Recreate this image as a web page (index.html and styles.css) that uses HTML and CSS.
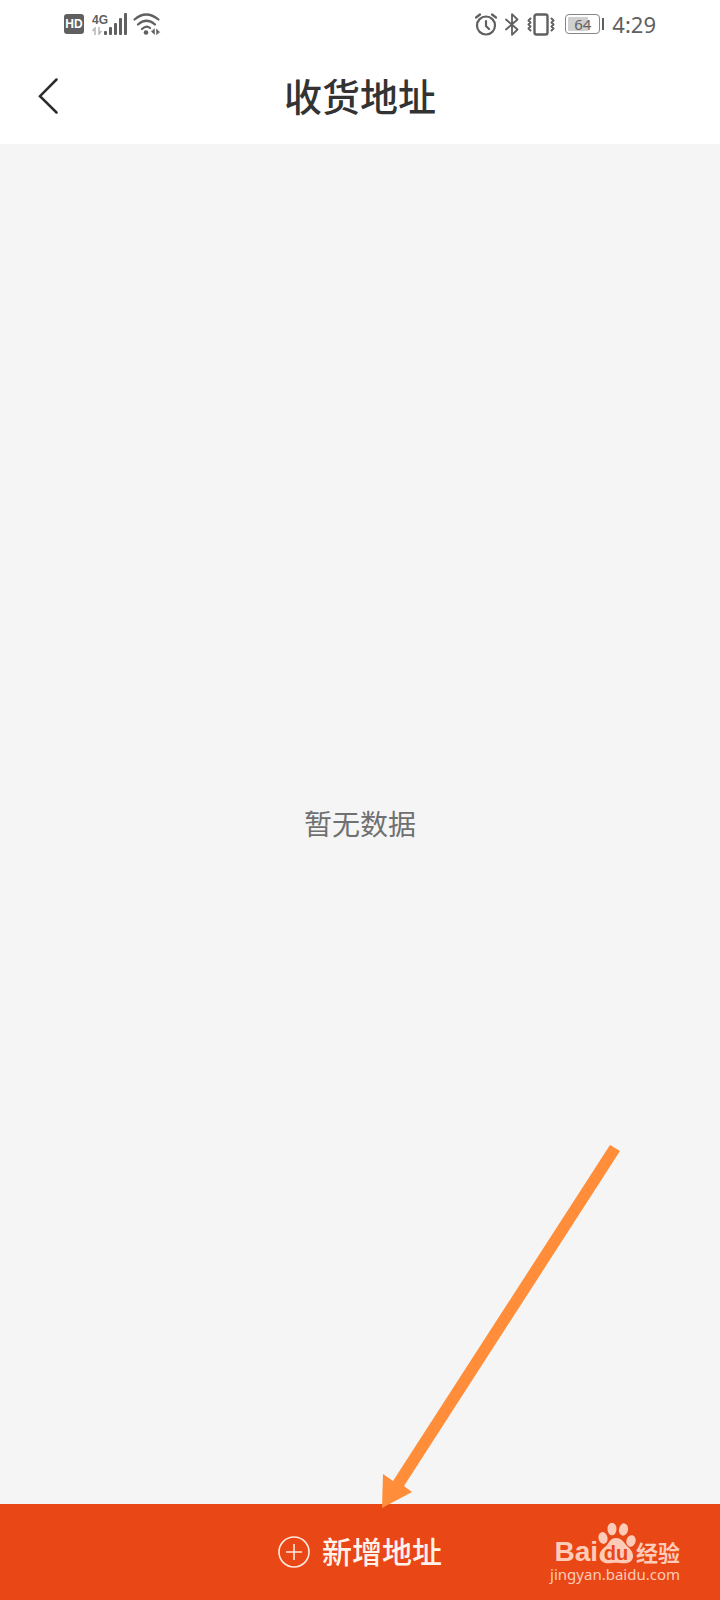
FILE: index.html
```html
<!DOCTYPE html>
<html lang="zh-CN">
<head>
    <meta charset="utf-8">
    <meta name="viewport" content="width=device-width, initial-scale=1">
    <title>收货地址</title>
    <link rel="stylesheet" href="styles.css">
</head>
<body>
    <div class="page">
        <div class="status-bar">
            <div class="status-left">
                <span class="hd">HD</span>
                <div class="network">
                    <span class="network-type">4G</span>
                    <svg width="10" height="8" viewBox="0 0 10 8" fill="none" stroke="#b5b5b5" stroke-width="1.5">
                        <path d="M3 8V1L0.5 4M7 0v7l2.5-3"/>
                    </svg>
                </div>
                <svg class="signal" width="23" height="22" viewBox="0 0 23 22" fill="#606060">
                    <rect x="0" y="18" width="3" height="4" rx="1"/>
                    <rect x="5" y="14" width="3" height="8" rx="1"/>
                    <rect x="10" y="10" width="3" height="12" rx="1"/>
                    <rect x="15" y="5" width="3" height="17" rx="1"/>
                    <rect x="20" y="0" width="3" height="22" rx="1"/>
                </svg>
                <svg class="wifi" width="28" height="22" viewBox="0 0 28 22" fill="none" stroke="#606060" stroke-width="2.2" stroke-linecap="round">
                    <path d="M1.5 6.5Q13 -3.5 25.5 6.5M5 11.5Q13.5 4 22 11.5M9 16Q13.5 12 17 15"/>
                    <circle cx="13" cy="19.5" r="2.3" fill="#606060" stroke="none"/>
                    <path d="M21.5 16v5.5l-3-3zM23.5 21.5v-5.5l3 3z" fill="#606060" stroke-width="0.5"/>
                </svg>
            </div>
            <div class="status-right">
                <svg width="22" height="23" viewBox="0 0 22 23" fill="none" stroke="#606060" stroke-width="2.2" stroke-linecap="round" stroke-linejoin="round">
                    <circle cx="11" cy="12.5" r="9"/>
                    <path d="M1 4.5L5 1.5M21 4.5L17 1.5M11 8v5l3 3"/>
                </svg>
                <svg width="14" height="23" viewBox="0 0 14 23" fill="none" stroke="#606060" stroke-width="1.8" stroke-linecap="round" stroke-linejoin="round">
                    <path d="M1 6.5L12.5 16.5 7 21.8V1.2L12.5 6.5 1 16.5"/>
                </svg>
                <svg width="28" height="23" viewBox="0 0 28 23" fill="none" stroke="#606060" stroke-width="2" stroke-linecap="round" stroke-linejoin="round">
                    <rect x="7.5" y="1.5" width="13" height="20" rx="2" stroke-width="2.4"/>
                    <path d="M3.5 5.5L1.5 7.5l2 2-2 2 2 2-2 2 2 2M24.5 5.5l2 2-2 2 2 2-2 2 2 2-2 2"/>
                </svg>
                <div class="battery"><span class="battery-body">64</span></div>
                <span class="time">4:29</span>
            </div>
        </div>

        <header class="header">
            <button class="back" type="button" aria-label="返回">
                <svg width="20" height="36" viewBox="0 0 20 36" fill="none" stroke="#2c2c2c" stroke-width="2.5" stroke-linecap="round">
                    <path d="M18.5 1.5L2 18.2 18.5 34.5"/>
                </svg>
            </button>
            <h1 class="title">收货地址</h1>
        </header>

        <main class="content">
            <p class="empty">暂无数据</p>
        </main>

        <footer class="footer">
            <button class="add" type="button">
                <svg width="32" height="32" viewBox="0 0 32 32" fill="none" stroke="#ffe9df" stroke-width="1.6">
                    <circle cx="16" cy="16" r="15"/>
                    <path d="M8 16h16M16 8v16"/>
                </svg>
                <span>新增地址</span>
            </button>
            <div class="watermark">
                <div class="brand">
                    <span class="brand-en">Bai</span>
                    <svg class="paw" width="38" height="42" viewBox="0 0 38 42" fill="#ffcbb9">
                        <ellipse cx="5" cy="16" rx="4.5" ry="6" transform="rotate(-12 5 16)"/>
                        <ellipse cx="14" cy="7" rx="4.5" ry="6.3"/>
                        <ellipse cx="25.5" cy="7.5" rx="4.5" ry="6.2" transform="rotate(10 25.5 7.5)"/>
                        <ellipse cx="33" cy="19" rx="4.6" ry="5.8" transform="rotate(14 33 19)"/>
                        <path d="M18 16c5 0 7 3 10 7 3 3 7 6 7 11 0 5-4 7.500-9 7.300-3 0-5-0.500-8-0.500s-5 0.500-8 0.500c-5 0-8.500-3-8.500-7.300 0-5 4.500-8 7.500-11 3-4 4-7 9-7z"/>
                        <text class="paw-text" x="18" y="38" text-anchor="middle">du</text>
                    </svg>
                    <span class="brand-cn">经验</span>
                </div>
                <span class="site">jingyan.baidu.com</span>
            </div>
        </footer>

        <!-- pointer to the add button -->
        <svg class="arrow" width="244" height="370" viewBox="0 0 244 370" fill="#ff8d3a">
            <path d="M230 3l10 6L24 344l8 6L2 366 3 332l10 7z"/>
        </svg>
    </div>
</body>
</html>
```

FILE: styles.css
```css
* {
    box-sizing: border-box;
}
body {
    margin: 0;
    font-family: "Noto Sans", "Noto Sans CJK SC", sans-serif;
    background-color: #f5f5f5;
}
button {
    border: 0;
    padding: 0;
    background: none;
    font-family: inherit;
    cursor: pointer;
}
svg {
    display: block;
    flex-shrink: 0;
}
.page {
    position: relative;
    display: flex;
    flex-direction: column;
    min-height: 100vh;
}

/* status bar */
.status-bar {
    display: flex;
    justify-content: space-between;
    align-items: center;
    height: 48px;
    padding: 0 64px;
    background-color: #fff;
    color: #606060;
}
.status-left,
.status-right {
    display: flex;
    align-items: center;
}
.status-right {
    gap: 8px;
}
.hd {
    width: 20px;
    margin-right: 8px;
    border-radius: 3px;
    background-color: #606060;
    color: #fff;
    font: bold 12px/20px "Liberation Sans", sans-serif;
    text-align: center;
}
.network {
    width: 12px;
}
.network-type {
    display: block;
    font: bold 12px/14px "Liberation Sans Narrow", "Liberation Sans", sans-serif;
}
.wifi {
    margin-left: 6px;
}
.battery {
    display: flex;
    align-items: center;
    gap: 2px;
    margin-left: 2px;
}
.battery::after {
    content: "";
    width: 2px;
    height: 12px;
    background-color: #606060;
}
.battery-body {
    width: 35px;
    border: 1px solid #858585;
    border-radius: 4px;
    padding: 2px;
    background: linear-gradient(to right, #d0d0d0 70%, #fff 70%) content-box;
    font-size: 15px;
    line-height: 14px;
    text-align: center;
}
.time {
    font-size: 22px;
    line-height: 24px;
}

/* title bar */
.header {
    display: grid;
    grid-template-columns: 96px 1fr 96px;
    align-items: center;
    height: 96px;
    background-color: #fff;
}
.back {
    display: flex;
    align-items: center;
    height: 96px;
    padding-left: 38px;
}
.title {
    margin: 0;
    color: #333;
    font-size: 38px;
    font-weight: 500;
    line-height: 48px;
    text-align: center;
}

.content {
    flex: 1;
    display: flex;
    justify-content: center;
    align-items: center;
}
.empty {
    margin: 0;
    color: #707070;
    font-size: 28px;
    line-height: 36px;
}

/* bottom button */
.footer {
    position: relative;
    background-color: #e94715;
}
.add {
    display: flex;
    justify-content: center;
    align-items: center;
    gap: 12px;
    width: 100%;
    height: 96px;
    color: #fff2eb;
    font-size: 30px;
    font-weight: 500;
    line-height: 40px;
}
.watermark {
    position: absolute;
    right: 40px;
    bottom: 16px;
    color: #ffcbb9;
    pointer-events: none;
}
.brand {
    display: flex;
    justify-content: flex-end;
    align-items: flex-end;
}
.brand-en {
    font: bold 28px/24px "Liberation Sans", sans-serif;
}
.brand-cn {
    font-size: 22px;
    font-weight: 700;
    line-height: 24px;
}
.paw-text {
    fill: #e94715;
    font: bold 20px "Liberation Sans", sans-serif;
}
.site {
    display: block;
    font-size: 15px;
    line-height: 20px;
}

.arrow {
    position: absolute;
    left: calc(50% + 20px);
    bottom: 88px;
    pointer-events: none;
}
```
